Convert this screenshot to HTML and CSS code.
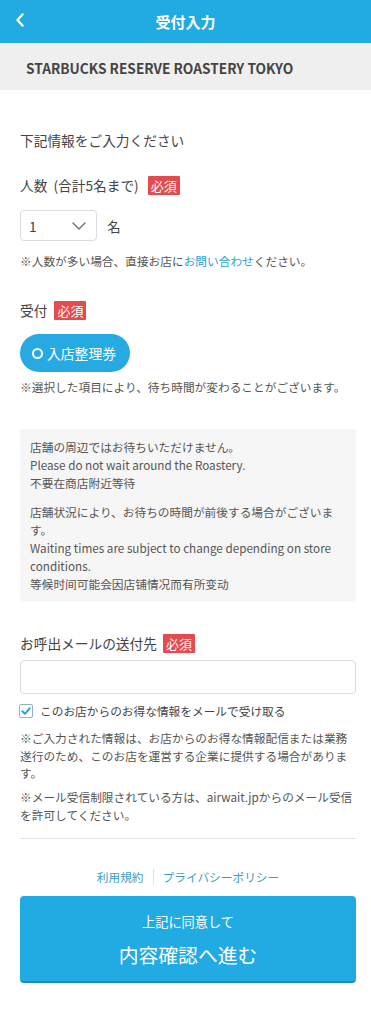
FILE: index.html
```html
<!DOCTYPE html>
<html lang="ja">
<head>
<meta charset="utf-8">
<title>受付入力</title>
<link rel="stylesheet" href="styles.css">
</head>
<body>
<header class="topbar">
  <span class="back">
    <svg width="10" height="16" viewBox="0 0 10 16"><polyline points="7.5,2.5 2.5,8 7.5,13.5" fill="none" stroke="#fff" stroke-width="2.4" stroke-linecap="round" stroke-linejoin="round"/></svg>
  </span>
  <h1 class="title">受付入力</h1>
</header>
<div class="shop">STARBUCKS RESERVE ROASTERY TOKYO</div>
<main class="content">
  <p class="intro">下記情報をご入力ください</p>

  <div class="label label-people"><span>人数 <span class="paren">(合計5名まで)</span></span><span class="req">必須</span></div>
  <div class="people-row">
    <div class="select">
      <span>1</span>
      <svg class="chev" width="14" height="8" viewBox="0 0 14 8"><polyline points="1,1 7,7 13,1" fill="none" stroke="#777" stroke-width="1.5" stroke-linecap="round" stroke-linejoin="round"/></svg>
    </div>
    <span class="unit">名</span>
  </div>
  <p class="note note-people">※人数が多い場合、直接お店に<a class="link" href="#">お問い合わせ</a>ください。</p>

  <div class="label label-type"><span>受付</span><span class="req">必須</span></div>
  <div class="pill">
    <span class="ring"></span>
    <span>入店整理券</span>
  </div>
  <p class="note note-type">※選択した項目により、待ち時間が変わることがございます。</p>

  <div class="infobox">
    <p>店舗の周辺ではお待ちいただけません。<br>Please do not wait around the Roastery.<br>不要在商店附近等待</p>
    <p>店舗状況により、お待ちの時間が前後する場合がございます。<br>Waiting times are subject to change depending on store conditions.<br>等候时间可能会因店铺情况而有所变动</p>
  </div>

  <div class="label label-mail"><span>お呼出メールの送付先</span><span class="req">必須</span></div>
  <input class="mail" type="email" aria-label="メールアドレス">
  <label class="check-row">
    <span class="checkbox">
      <svg width="12" height="12" viewBox="0 0 12 12"><polyline points="2.3,6.3 5,8.8 9.8,3.2" fill="none" stroke="#2a9fd6" stroke-width="2" stroke-linecap="round" stroke-linejoin="round"/></svg>
    </span>
    <span>このお店からのお得な情報をメールで受け取る</span>
  </label>
  <p class="note note-info">※ご入力された情報は、お店からのお得な情報配信または業務遂行のため、このお店を運営する企業に提供する場合があります。</p>
  <p class="note note-block">※メール受信制限されている方は、airwait.jpからのメール受信を許可してください。</p>

  <hr class="sep">

  <nav class="links">
    <a href="#">利用規約</a>
    <span class="divider"></span>
    <a href="#">プライバシーポリシー</a>
  </nav>

  <button class="submit" type="button">
    <span class="sub-small">上記に同意して</span>
    <span class="sub-big">内容確認へ進む</span>
  </button>
</main>
</body>
</html>
```
FILE: styles.css
```css
* { box-sizing: border-box; }
html, body { margin: 0; padding: 0; background: #fff; }
body {
  font-family: "Noto Sans CJK JP", "Noto Sans", sans-serif;
  color: #333;
  width: 371px;
}
p { margin: 0; }

.topbar {
  height: 43px;
  background: #22abe3;
  display: flex;
  align-items: center;
  justify-content: center;
  position: relative;
}
.back {
  position: absolute;
  left: 15px;
  top: 12px;
  width: 10px;
  height: 16px;
  display: block;
}
.back svg { display: block; }
.title {
  margin: 0;
  color: #fff;
  font-size: 15px;
  font-weight: 700;
  line-height: 20px;
}

.shop {
  height: 47px;
  background: #efefef;
  display: flex;
  align-items: center;
  padding: 3px 0 0 26px;
  font-size: 13.7px;
  font-weight: 700;
  color: #444;
}

.content { padding: 0 15px 0 20px; }

.intro {
  margin-top: 40px;
  font-size: 13.7px;
  line-height: 20px;
  color: #444;
}

.label {
  display: flex;
  align-items: center;
  font-size: 13.7px;
  line-height: 20px;
  color: #444;
}
.paren { margin-left: 3px; }
.req {
  display: inline-block;
  background: #e34b4e;
  color: #fff;
  font-size: 13px;
  line-height: 19px;
  height: 19px;
  padding: 0 3px;
  margin-left: 8px;
  border-radius: 1px;
}
.label-people .req { margin-left: 9px; }
.label-type .req { margin-left: 7px; }
.label-people { margin-top: 25px; }

.people-row {
  margin-top: 15px;
  display: flex;
  align-items: center;
}
.select {
  width: 77px;
  height: 31px;
  border: 1px solid #dcdcdc;
  border-radius: 4px;
  display: flex;
  align-items: center;
  justify-content: space-between;
  padding: 0 10px 0 8px;
  font-size: 13.7px;
  color: #444;
}
.chev { display: block; }
.unit {
  margin-left: 10px;
  font-size: 13.7px;
  color: #444;
}

.note {
  font-size: 11.7px;
  line-height: 18px;
  color: #555;
}
.note-people { margin-top: 11px; }
.link { color: #2aa2d4; text-decoration: none; }

.label-type { margin-top: 30px; }

.pill {
  margin-top: 14px;
  width: 110px;
  height: 38px;
  border-radius: 19px;
  background: #27aae1;
  color: #fff;
  display: flex;
  align-items: center;
  padding-left: 12px;
  font-size: 13.8px;
}
.ring {
  width: 11px;
  height: 11px;
  border: 2px solid #fff;
  border-radius: 50%;
  margin-right: 4px;
}
.note-type { margin-top: 6px; }

.infobox {
  margin-top: 33px;
  background: #f6f6f6;
  border-radius: 3px;
  padding: 9px 14px 9px 10px;
  font-size: 11.7px;
  line-height: 18px;
  color: #555;
}
.infobox p + p { margin-top: 11px; }

.label-mail { margin-top: 31px; }
.label-mail .req { margin-left: 6px; }

.mail {
  display: block;
  margin-top: 7px;
  width: 100%;
  height: 34px;
  border: 1px solid #dcdcdc;
  border-radius: 4px;
  background: #fff;
  font: inherit;
  padding: 0 8px;
}

.check-row {
  margin-top: 8px;
  display: flex;
  align-items: center;
  font-size: 11.7px;
  line-height: 18px;
  color: #444;
}
.checkbox {
  width: 14px;
  height: 14px;
  border: 1px solid #8fb3c4;
  border-radius: 2px;
  background: #fff;
  display: flex;
  align-items: center;
  justify-content: center;
  margin-left: -1px;
  margin-right: 7px;
}
.checkbox svg { display: block; }

.note-info { margin-top: 9px; line-height: 17.5px; }
.note-block { margin-top: 6.5px; line-height: 17.5px; }

.sep {
  margin: 14.5px 0 0;
  border: 0;
  height: 1px;
  background: #e6e6e6;
}

.links {
  margin-top: 29px;
  display: flex;
  align-items: center;
  justify-content: center;
  font-size: 11.7px;
  line-height: 18px;
}
.links a { color: #3a9dc8; text-decoration: none; }
.divider {
  width: 1px;
  height: 16px;
  background: #e2e2e2;
  margin: 0 9px;
}

.submit {
  display: flex;
  flex-direction: column;
  align-items: center;
  margin-top: 10px;
  width: 100%;
  height: 87px;
  border: 0;
  border-bottom: 2px solid #1b8cc0;
  border-radius: 4px;
  background: #22abe3;
  color: #fff;
  font-family: inherit;
  padding: 17px 0 0;
}
.sub-small {
  font-size: 13.2px;
  line-height: 18px;
}
.sub-big {
  margin-top: 10px;
  font-size: 19.8px;
  line-height: 28px;
}
```
